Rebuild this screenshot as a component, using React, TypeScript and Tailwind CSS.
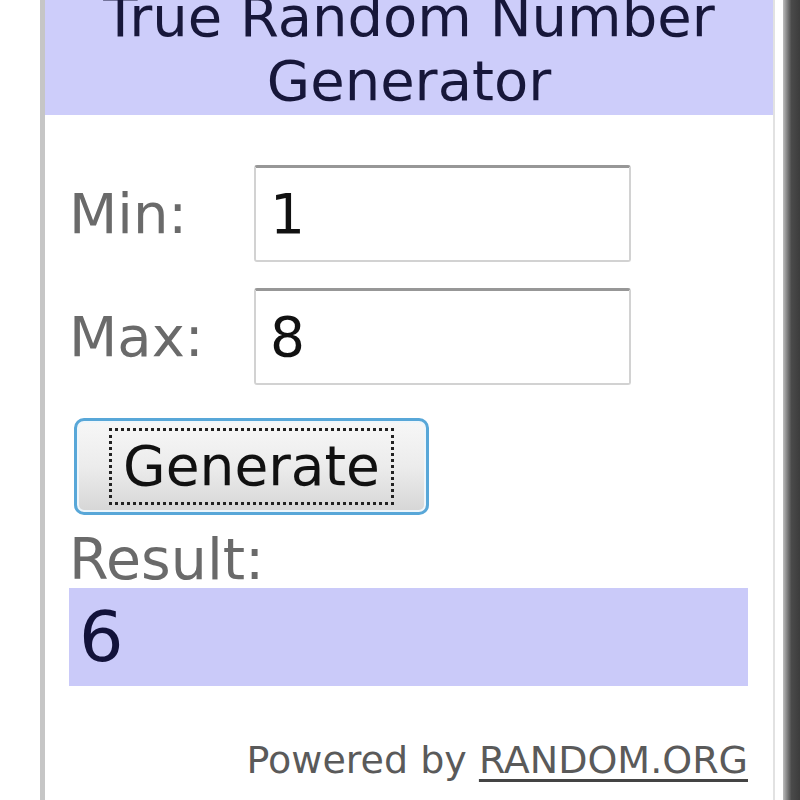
import React from "react";

function Field({ label, value }: { label: string; value: string }) {
    return (
        <div className="flex items-center h-[97px]">
            <div className="w-[185px] text-[56px] leading-none text-[#6a6a6a]">{label}</div>
            <input
                readOnly
                value={value}
                className="w-[377px] h-[97px] pl-[14px] bg-white rounded-[3px] border-2 border-[#d2d2d2] border-t-[3px] border-t-[#979797] text-[55px] leading-none text-[#111] font-['DejaVu_Sans',sans-serif] outline-none"
            />
        </div>
    );
}

export default function App() {
    return (
        <div className="w-[800px] h-[800px] bg-white flex overflow-hidden font-['DejaVu_Sans',sans-serif]">
            {/* left margin */}
            <div className="w-[40px] shrink-0 bg-white" />

            {/* widget panel */}
            <div className="w-[735px] shrink-0 flex flex-col bg-white border-l-[5px] border-[#c6c6c6] border-r-[2px] border-r-[#e2e2e2]">
                {/* Header */}
                <div className="h-[115px] shrink-0 bg-[#cdcdfa] overflow-hidden">
                    <div className="-mt-[15px] text-center text-[56px] leading-[64px] text-[#17173a]">
                        True Random Number
                        <br />
                        Generator
                    </div>
                </div>

                {/* Body */}
                <div className="flex flex-col pl-[24px] pr-[25px] pt-[50px]">
                    <Field label="Min:" value="1" />
                    <div className="mt-[26px]">
                        <Field label="Max:" value="8" />
                    </div>

                    <button className="mt-[33px] ml-[5px] w-[355px] h-[97px] flex items-center justify-center rounded-[10px] border-[3px] border-[#58a7d8] bg-linear-to-b from-[#f7f7f7] via-[#ececec] to-[#d6d6d6] shadow-[inset_0_0_0_2px_#eef6fb]">
                        <span className="h-[77px] w-[285px] flex items-center justify-center border-[3px] border-dotted border-[#222] text-[55px] leading-none text-[#111] font-['DejaVu_Sans',sans-serif]">
                            Generate
                        </span>
                    </button>

                    <div className="mt-[17px] text-[57px] leading-[54px] text-[#6a6a6a]">Result:</div>

                    <div className="mt-[2px] h-[98px] flex items-center pl-[10px] bg-[#cacaf9] text-[70px] leading-none text-[#12123a]">
                        6
                    </div>

                    <div className="mt-[55px] text-right text-[38px] leading-none text-[#5a5a5a]">
                        Powered by{" "}
                        <span className="underline decoration-[3px] underline-offset-[6px] decoration-[#444]">
                            RANDOM.ORG
                        </span>
                    </div>
                </div>
            </div>

            {/* right edge */}
            <div className="w-[8px] shrink-0 bg-white" />
            <div className="w-[17px] shrink-0 bg-linear-to-r from-[#bdbdbd] via-[#4a4a4a] to-[#3c3c3c]" />
        </div>
    );
}
